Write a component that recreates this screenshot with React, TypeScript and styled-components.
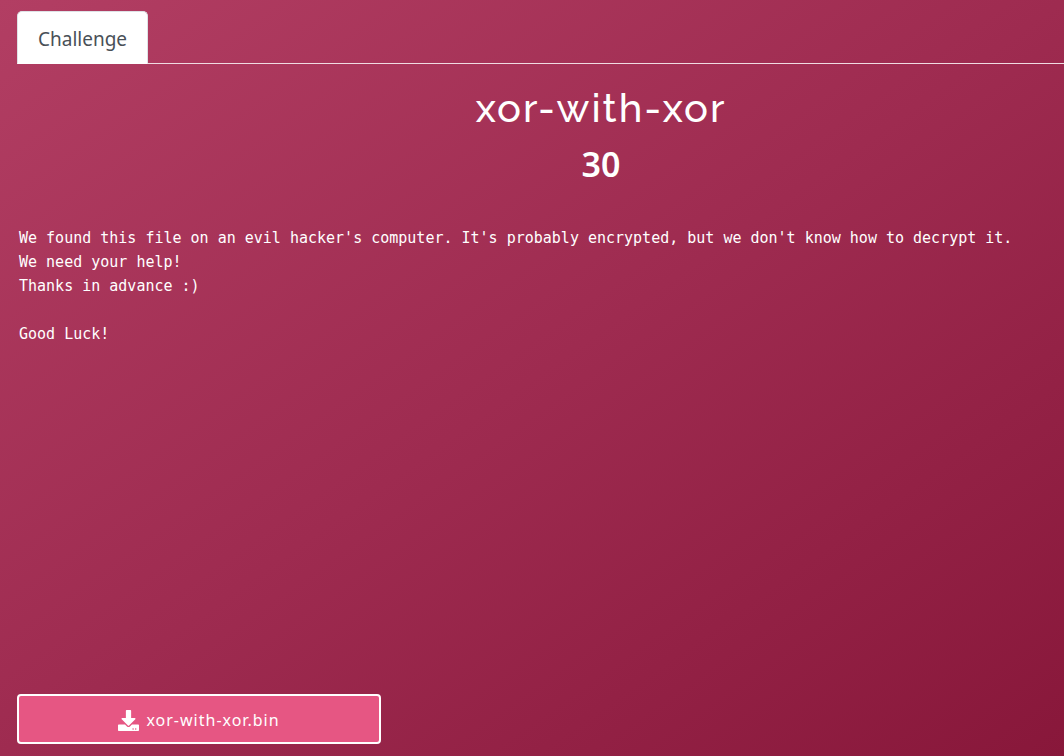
import React from "react";
import styled, { createGlobalStyle } from "styled-components";
import { FaDownload } from "react-icons/fa";

const GlobalStyle = createGlobalStyle`
  *, *::before, *::after { box-sizing: border-box; }
  body {
    margin: 0;
    color: #fff;
    font-family: "Noto Sans", "Open Sans", sans-serif;
  }
`;

const Page = styled.div`
  display: flex;
  flex-direction: column;
  min-height: 100vh;
  padding: 11px 0 12px 17px;
  overflow: hidden;
  background: linear-gradient(to bottom right, #b23e63 0%, #9e2b50 50%, #88173a 100%);
`;

const TabBar = styled.nav`
  display: flex;
  border-bottom: 1px solid #f0dbe2;
`;

const Tab = styled.button`
  height: 53px;
  margin-bottom: -1px;
  padding: 3px 20px 0;
  border: 1px solid #dee2e6;
  border-bottom-color: #fff;
  border-radius: 5px 5px 0 0;
  background: #fff;
  color: #495057;
  font: 400 19px/28px "Noto Sans", "Open Sans", sans-serif;
`;

const Header = styled.header`
  padding: 20px 0 0 121px;
  text-align: center;
`;

const Title = styled.h1`
  margin: 0;
  font: 500 40px/48px Raleway, Lato, sans-serif;
  letter-spacing: 2px;
`;

const Points = styled.h2`
  margin: 12px 0 0;
  font: 600 34px/40px "Noto Sans", "Open Sans", sans-serif;
`;

const Description = styled.pre`
  flex: 1;
  margin: 42px 0 0;
  padding-left: 2px;
  font: 400 15px/24px "DejaVu Sans Mono", monospace;
`;

const Download = styled.a`
  display: flex;
  align-items: center;
  justify-content: center;
  gap: 7px;
  width: 364px;
  max-width: 100%;
  height: 50px;
  padding-top: 2px;
  border: 2px solid #fff;
  border-radius: 4px;
  background: #e65683;
  color: #fff;
  font-size: 16px;
  font-weight: 400;
  line-height: 24px;
  letter-spacing: 1px;
  text-decoration: none;
`;

const description = `We found this file on an evil hacker's computer. It's probably encrypted, but we don't know how to decrypt it.
We need your help!
Thanks in advance :)

Good Luck!`;

export default function App() {
  return (
    <>
      <GlobalStyle />
      <Page>
        <TabBar>
          <Tab type="button">Challenge</Tab>
        </TabBar>
        <Header>
          <Title>xor-with-xor</Title>
          <Points>30</Points>
        </Header>
        <Description>{description}</Description>
        <Download href="#xor-with-xor.bin">
          <FaDownload size={21} aria-hidden />
          <span>xor-with-xor.bin</span>
        </Download>
      </Page>
    </>
  );
}
